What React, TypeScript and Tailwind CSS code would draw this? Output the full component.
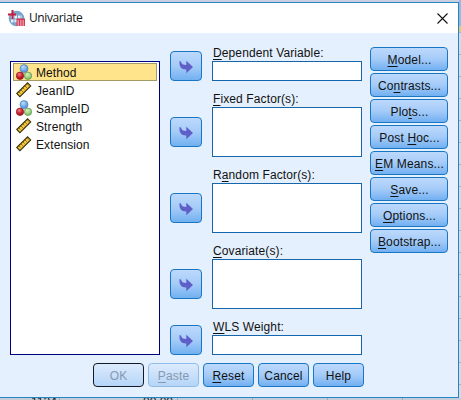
import React from "react";

type Kind = "nominal" | "scale";

const variables: { name: string; kind: Kind }[] = [
  { name: "Method", kind: "nominal" },
  { name: "JeanID", kind: "scale" },
  { name: "SampleID", kind: "nominal" },
  { name: "Strength", kind: "scale" },
  { name: "Extension", kind: "scale" },
];

// "&" marks the letter that carries the keyboard mnemonic.
function Mnemonic({ text }: { text: string }) {
  const i = text.indexOf("&");
  if (i < 0) return <>{text}</>;
  return (
    <>
      {text.slice(0, i)}
      <span className="underline decoration-1 underline-offset-2 [text-decoration-skip-ink:none]">{text[i + 1]}</span>
      {text.slice(i + 2)}
    </>
  );
}

function NominalIcon() {
  return (
    <svg width="16" height="16" viewBox="0 0 16 16" className="shrink-0">
      <defs>
        <radialGradient id="nb" cx=".4" cy=".3" r=".7"><stop offset="0" stopColor="#b9dcff" /><stop offset="1" stopColor="#4c8fd6" /></radialGradient>
        <radialGradient id="nr" cx=".4" cy=".3" r=".7"><stop offset="0" stopColor="#f08088" /><stop offset=".6" stopColor="#c8202c" /><stop offset="1" stopColor="#a01020" /></radialGradient>
        <radialGradient id="ng" cx=".4" cy=".3" r=".7"><stop offset="0" stopColor="#d4f5b8" /><stop offset="1" stopColor="#7dbb62" /></radialGradient>
      </defs>
      <circle cx="8" cy="4.6" r="4" fill="url(#nb)" stroke="#4a7cae" strokeWidth=".7" />
      <circle cx="12" cy="11.8" r="3.7" fill="url(#ng)" stroke="#5c9150" strokeWidth=".7" />
      <circle cx="4" cy="11.8" r="3.7" fill="url(#nr)" stroke="#8c1a28" strokeWidth=".7" />
    </svg>
  );
}

function ScaleIcon() {
  return (
    <svg width="16" height="16" viewBox="0 0 16 16" className="shrink-0">
      <path d="M.8 11.500 11.600.8l3.100 3.100L3.900 14.700z" fill="#f2c73c" stroke="#3a300c" strokeWidth="1.1" />
      <path d="m3.2 10.200 1.200 1.200M5.200 8.200l1.500 1.500M7.200 6.200l1.200 1.200M9.200 4.200l1.500 1.500M11.200 2.400l1.200 1.200" stroke="#3a300c" strokeWidth=".7" />
    </svg>
  );
}

function AppIcon() {
  return (
    <svg width="17" height="17" viewBox="0 0 17 17" className="shrink-0">
      <circle cx="8.5" cy="8.5" r="7.8" fill="#7ba4cc" />
      <path d="M3 5.5h11v7H3z" fill="#e6eff8" />
      <path d="M3 9h11M6 6v7M9.500 3v9M13 4v6M5 13h5" stroke="#7ba4cc" strokeWidth="1" />
      <path d="M0 4.500h8M4.500 0v9" stroke="#c51f3e" strokeWidth="2" />
      <path d="M8.500 8.500H17V16H8.500z" fill="#d33a55" />
      <path d="M9.500 11h1.500m1 0h1.500m1 0H16M9.500 13h1.500m1 0h1.500m1 0H16M9.500 15h1.500m1 0h1.500m1 0H16" stroke="#fbe8ec" strokeWidth="1" />
    </svg>
  );
}

const face = "rounded-[4px] border border-[#1976c5] bg-linear-to-b from-[#bdd9fc] via-[#a4cbf8] to-[#72b0f1]";

function MoveButton() {
  return (
    <button className={`flex h-[30px] w-8 shrink-0 items-center justify-center pt-px ${face}`}>
      <svg width="16" height="14" viewBox="0 0 16 14">
        <path d="M1.500 1.200h1.300C3.500 4 5 5 8.300 5V.8L15 7 8.300 13.200V9.400C4 9.600 1 7.500 1.500 1.200z" fill="#605fc8" />
      </svg>
    </button>
  );
}

function Field({ label, tall }: { label: string; tall?: boolean }) {
  return (
    <div className="flex items-end gap-[10px]">
      <div className={tall ? "mb-[10px] flex" : "flex"}><MoveButton /></div>
      <div className="flex flex-col">
        <label className="h-4 pl-px text-[12px] leading-4 tracking-[0.11px] whitespace-nowrap"><Mnemonic text={label} /></label>
        <div className={`w-[150px] border border-[#1566ab] bg-white ${tall ? "h-[50px]" : "h-5"}`} />
      </div>
    </div>
  );
}

const options = ["&Model...", "Co&ntrasts...", "Plo&ts...", "Post &Hoc...", "&EM Means...", "&Save...", "&Options...", "&Bootstrap..."];

export default function App() {
  return (
    <div className="relative flex h-[400px] w-[461px] flex-col overflow-hidden bg-[#cbd0e0] pt-[2px] font-['Liberation_Sans',Arial,sans-serif] text-[12px] text-[#111]">
      <div className="absolute top-0 right-0 h-[400px] w-[2px] bg-[repeating-linear-gradient(to_bottom,#d3dbe7_0_10px,#a3b6cc_10px_11px,#d3dbe7_11px_22px)]">
        <div className="h-[26px] bg-[#8fbbe4]" />
        <div className="h-[6px] bg-[#dccb7b]" />
      </div>
      <div className="absolute bottom-0 left-0 h-[2px] w-[461px] overflow-hidden bg-[#c5ced8]">
        <span className="absolute top-[-2px] left-[31px] leading-3">1124</span>
        <span className="absolute top-[-2px] left-[143px] leading-3">00.00</span>
        <div className="flex h-full pl-[59px]">
          <div className="w-[118px] border-l border-[#a0adba]" />
          <div className="w-[75px] border-l border-[#a0adba]" />
          <div className="w-[75px] border-l border-[#a0adba]" />
          <div className="w-[75px] border-l border-[#a0adba]" />
          <div className="border-l border-[#a0adba]" />
        </div>
      </div>
      <main className="relative flex h-[396px] w-[459px] flex-col border-t border-r border-b border-[#2585c2] bg-[#e4f0fd]">
        <header className="flex h-[30px] shrink-0 items-center bg-white pr-[10px] pl-2">
          <AppIcon />
          <h1 className="ml-1 grow font-['Open_Sans','Noto_Sans',sans-serif] text-[12px] leading-4 tracking-[-0.4px]">Univariate</h1>
          <svg width="11" height="11" viewBox="0 0 11 11"><path d="m.5.5 10 10m0-10-10 10" stroke="#111" strokeWidth="1.100" /></svg>
        </header>
        <div className="flex pl-[10px]">
          <ul className="mt-7 h-[294px] w-[150px] border border-[#00007f] bg-white p-[2px] pt-px">
            {variables.map((v, i) => (
              <li key={v.name} className={`flex h-[18px] items-center gap-1 border pl-[2px] tracking-[0.1px] ${i === 0 ? "border-[#a39a66] bg-[#ffe48b]" : "border-transparent"}`}>
                {v.kind === "nominal" ? <NominalIcon /> : <ScaleIcon />}
                <span className="pt-[2px] leading-4">{v.name}</span>
              </li>
            ))}
          </ul>
          <div className="mt-3 ml-[10px] flex flex-col gap-[10px]">
            <Field label="&Dependent Variable:" />
            <Field label="&Fixed Factor(s):" tall />
            <Field label="R&andom Factor(s):" tall />
            <Field label="&Covariate(s):" tall />
            <Field label="&WLS Weight:" />
          </div>
          <div className="mt-[14px] ml-2 flex flex-col gap-[2px]">
            {options.map((o) => (
              <button key={o} className={`h-6 w-[78px] pt-[2px] pl-px text-center leading-5 tracking-[0.15px] whitespace-nowrap ${face}`}><Mnemonic text={o} /></button>
            ))}
          </div>
        </div>
        <footer className="mt-2 flex gap-1 pl-[93px] leading-5 tracking-[0.15px]">
          <button disabled className="h-6 w-[51px] rounded-[4px] border border-[#111a26] bg-linear-to-b from-[#dcebfd] to-[#b5d5f8] pt-[2px] text-[#8798ae]">OK</button>
          <button disabled className="h-6 w-[51px] rounded-[4px] border border-[#8fbde8] bg-linear-to-b from-[#dcebfd] to-[#b5d5f8] pt-[2px] text-[#8798ae]"><Mnemonic text="&Paste" /></button>
          <button className={`h-6 w-[51px] pt-[2px] ${face}`}><Mnemonic text="&Reset" /></button>
          <button className={`h-6 w-[51px] pt-[2px] ${face}`}>Cancel</button>
          <button className={`h-6 w-[51px] pt-[2px] ${face}`}>Help</button>
        </footer>
      </main>
    </div>
  );
}
